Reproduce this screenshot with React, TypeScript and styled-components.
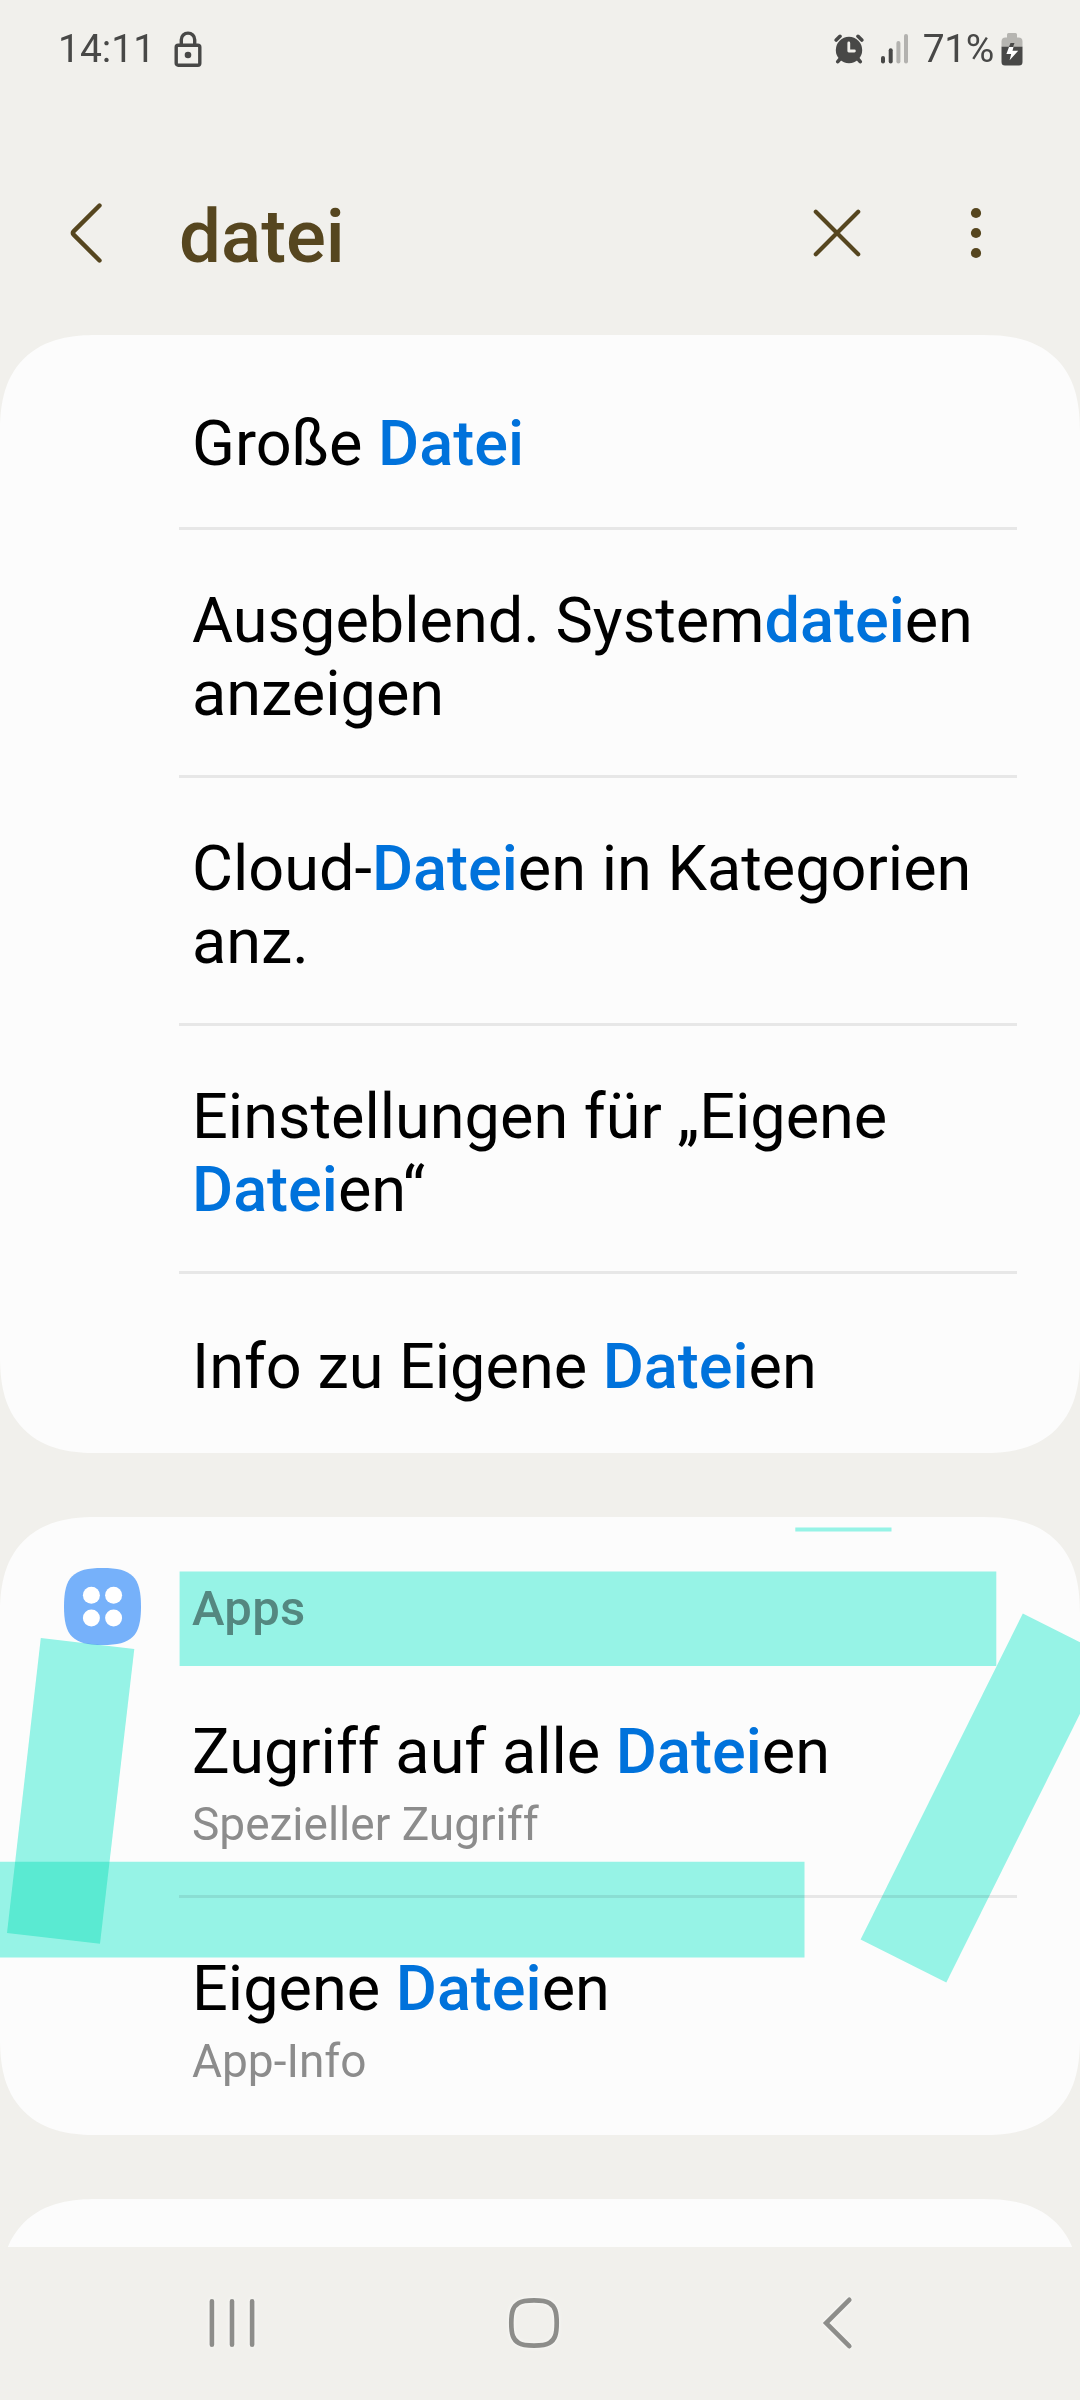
import React from 'react';
import styled, { createGlobalStyle } from 'styled-components';

const GlobalStyle = createGlobalStyle`
  html, body { margin: 0; padding: 0; background: #f1f0ec; }
  * { box-sizing: border-box; }
`;

const Screen = styled.div`
  position: relative;
  display: flex;
  flex-direction: column;
  width: 1080px;
  height: 2400px;
  overflow: hidden;
  background: #f1f0ec;
  font-family: Roboto, 'Noto Sans', sans-serif;
`;

const StatusBar = styled.header`
  display: flex;
  align-items: center;
  justify-content: space-between;
  height: 98px;
  padding: 0 57px 0 58px;
  color: #484847;
`;

const StatusGroup = styled.div<{ $gap: number }>`
  display: flex;
  align-items: center;
  gap: ${(p) => p.$gap}px;
`;

const StatusText = styled.span<{ $spacing?: number }>`
  font-size: 39px;
  line-height: 46px;
  letter-spacing: ${(p) => p.$spacing ?? 0}px;
`;

const Toolbar = styled.div`
  display: flex;
  align-items: center;
  height: 237px;
  padding: 33px 11px 0 61px;
  color: #56461f;
`;

const IconButton = styled.button<{ $w: number }>`
  display: flex;
  align-items: center;
  justify-content: center;
  width: ${(p) => p.$w}px;
  height: 90px;
  padding: 0;
  border: 0;
  background: none;
  color: inherit;
`;

const Query = styled.div`
  flex: 1;
  padding: 8px 0 0 72px;
  font-size: 74.5px;
  font-weight: 500;
  line-height: 86px;
`;

const Results = styled.main`
  display: flex;
  flex: 1;
  flex-direction: column;
  gap: 64px;
  min-height: 0;
  overflow: hidden;
`;

const Card = styled.section<{ $h: number; $top: number }>`
  display: flex;
  flex: none;
  flex-direction: column;
  height: ${(p) => p.$h}px;
  padding: ${(p) => p.$top}px 63px 0 179px;
  border-radius: 84px;
  background: #fcfcfc;

  @supports (corner-shape: squircle) {
    border-radius: 97px;
    corner-shape: superellipse(1.3);
  }
`;

const Row = styled.div<{ $h: number; $pad?: number }>`
  flex: none;
  height: ${(p) => p.$h}px;
  padding: ${(p) => p.$pad ?? 54}px 0 0 13px;

  & + & {
    border-top: 3px solid #e7e7e7;
  }
`;

const Title = styled.div`
  font-size: 63px;
  line-height: 73px;
  color: #000;
`;

const Match = styled.span`
  font-weight: 500;
  color: #0072db;
`;

const Subtitle = styled.div`
  font-size: 46px;
  line-height: 53px;
  padding-top: 10px;
  color: #8c8c8c;
`;

const GroupHeader = styled.div`
  display: flex;
  align-items: center;
  gap: 51px;
  height: 77px;
  margin: 0 0 16px -115px;
`;

const GroupName = styled.h2`
  margin: 4px 0 0;
  font-size: 49px;
  font-weight: 500;
  line-height: 56px;
  letter-spacing: 0.3px;
  color: #8c8c8c;
`;

const NavBar = styled.nav`
  display: grid;
  grid-template-columns: 302px 314px 40px;
  align-items: start;
  height: 153px;
  padding: 46px 222px 0 202px;
  color: #8d8d8a;

  svg {
    filter: drop-shadow(0 0 2px #fbfbf9);
  }
`;

const Marker = styled.svg`
  position: absolute;
  inset: 0;
  mix-blend-mode: multiply;
  pointer-events: none;

  polygon {
    fill: #98f6e9;
    mix-blend-mode: multiply;
  }
`;

const strips = [
  '795.3,1527.5 891.5,1527.5 891.5,1531.4 795.3,1531.4',
  '179.6,1571.6 996.3,1571.6 996.3,1666 179.6,1666',
  '40.8,1638 134.3,1649 100,1943.8 7,1933',
  '0,1861.7 804.5,1861.7 804.5,1957.6 0,1957.6',
  '1022.8,1613.5 1108.5,1656.5 946.3,1982.4 860.6,1939.6',
];

const LockIcon = () => (
  <svg width="28" height="36" viewBox="0 0 28 36" fill="none" stroke="currentColor" strokeWidth="3.4">
    <rect x="2.2" y="14.2" width="23.6" height="20" rx="2" />
    <path d="M7.3 14V8.8a6.7 6.7 0 0 1 13.4 0V14" />
    <circle cx="14" cy="24" r="3.3" fill="currentColor" stroke="none" />
  </svg>
);

const AlarmIcon = () => (
  <svg width="30" height="30" viewBox="0 0 30 30" fill="none" strokeLinecap="round">
    <circle cx="15" cy="16" r="13.2" fill="currentColor" />
    <g stroke="currentColor" strokeWidth="3.6">
      <path d="M2.2 6 6 2.3M27.8 6 24 2.3" />
      <path d="M6 25 3.8 27.6M24 25l2.2 2.6" />
    </g>
    <path d="M14.8 9v8h5.6" stroke="#f1f0ec" strokeWidth="2.8" strokeLinejoin="round" />
  </svg>
);

const SignalIcon = () => (
  <svg width="27" height="30" viewBox="0 0 27 30" fill="currentColor">
    <rect x="0" y="22" width="4" height="7.6" rx="2" />
    <rect x="7.7" y="14.3" width="4" height="15.3" rx="2" />
    <rect x="15.4" y="7" width="4" height="22.6" rx="2" fill="#b3b2af" />
    <rect x="23" y="0" width="4" height="29.6" rx="2" fill="#b3b2af" />
  </svg>
);

const BatteryIcon = () => (
  <svg width="22" height="33" viewBox="0 0 22 33">
    <path d="M7.5 0h7A1.5 1.5 0 0 1 16 1.5V4.4h1.5a4 4 0 0 1 4 4V14H.5V8.4a4 4 0 0 1 4-4H6V1.5A1.5 1.5 0 0 1 7.5 0z" fill="#b6b5b1" />
    <path d="M.5 13.7h21V29a3.500 3.500 0 0 1-3.500 3.500H4A3.500 3.500 0 0 1 .5 29z" fill="currentColor" />
    <path d="M9.500 10h4l-1.500 4H8z" fill="currentColor" />
    <path d="M8 14h4.500l-1 3.800h5.700L8.600 27.200l1.600-6.200H5.400z" fill="#fff" />
  </svg>
);

const BackIcon = () => (
  <svg width="40" height="64" viewBox="0 0 40 64" fill="none" stroke="currentColor" strokeWidth="4.4" strokeLinecap="round" strokeLinejoin="round">
    <path d="M35.500 4.500 9.600 30.400q-1.600 1.600 0 3.200L35.500 59.500" />
  </svg>
);

const ClearIcon = () => (
  <svg width="50" height="50" viewBox="0 0 50 50" stroke="currentColor" strokeWidth="4.200" strokeLinecap="round">
    <path d="M3.800 3.800 46.200 46.200M46.200 3.800 3.800 46.200" />
  </svg>
);

const MoreIcon = () => (
  <svg width="12" height="52" viewBox="0 0 12 52" fill="currentColor">
    <circle cx="6" cy="6" r="5.100" />
    <circle cx="6" cy="26" r="5.100" />
    <circle cx="6" cy="46" r="5.100" />
  </svg>
);

const AppsIcon = () => (
  <svg width="77" height="77" viewBox="0 0 77 77">
    <path d="M38.500 0C68 0 77 9 77 38.500S68 77 38.500 77 0 68 0 38.500 9 0 38.500 0z" fill="#76b1fa" />
    <g fill="#fff">
      <circle cx="27.400" cy="27.300" r="8.500" />
      <circle cx="49.600" cy="27.300" r="8.500" />
      <circle cx="27.400" cy="50" r="8.500" />
      <circle cx="49.600" cy="50" r="8.500" />
    </g>
  </svg>
);

const RecentsIcon = () => (
  <svg width="60" height="60" viewBox="0 0 60 60" stroke="currentColor" strokeWidth="4.600" strokeLinecap="round">
    <path d="M9.900 8.300V51.700M30 8.300V51.700M50.100 8.300V51.700" />
  </svg>
);

const HomeIcon = () => (
  <svg width="60" height="60" viewBox="0 0 60 60" fill="none" stroke="currentColor" strokeWidth="4.700">
    <path d="M30 7.300c6 0 11.500.2 15.300 2.600 5.800 3.500 7.400 9 7.400 20.100s-1.600 16.600-7.400 20.100C41.500 52.500 36 52.700 30 52.700s-11.500-.2-15.300-2.600C8.900 46.600 7.300 41.100 7.300 30s1.600-16.600 7.400-20.100C18.500 7.500 24 7.300 30 7.300z" />
  </svg>
);

const NavBackIcon = () => (
  <svg width="40" height="60" viewBox="0 0 40 60" fill="none" stroke="currentColor" strokeWidth="4.600" strokeLinecap="round">
    <path d="M31.300 6.800 8.100 30 31.300 53.200" />
  </svg>
);

const settings = [
  { h: 174, parts: ['Große ', 'Datei', ''] },
  { h: 248, parts: ['Ausgeblend. System', 'datei', 'en anzeigen'] },
  { h: 248, parts: ['Cloud-', 'Datei', 'en in Kategorien anz.'] },
  { h: 248, parts: ['Einstellungen für „Eigene ', 'Datei', 'en“'] },
  { h: 182, pad: 56, parts: ['Info zu Eigene ', 'Datei', 'en'] },
];

const apps = [
  { h: 234, parts: ['Zugriff auf alle ', 'Datei', 'en'], note: 'Spezieller Zugriff' },
  { h: 240, parts: ['Eigene ', 'Datei', 'en'], note: 'App-Info' },
];

const Highlighted = ({ parts }: { parts: string[] }) => (
  <Title>
    {parts[0]}
    <Match>{parts[1]}</Match>
    {parts[2]}
  </Title>
);

export default function App() {
  return (
    <>
      <GlobalStyle />
      <Screen>
        <StatusBar>
          <StatusGroup $gap={19}>
            <StatusText>14:11</StatusText>
            <LockIcon />
          </StatusGroup>
          <StatusGroup $gap={15}>
            <StatusGroup $gap={17}>
              <AlarmIcon />
              <SignalIcon />
            </StatusGroup>
            <StatusGroup $gap={7}>
              <StatusText $spacing={-0.4}>71%</StatusText>
              <BatteryIcon />
            </StatusGroup>
          </StatusGroup>
        </StatusBar>
        <Toolbar>
          <IconButton $w={46} aria-label="Zurück"><BackIcon /></IconButton>
          <Query>datei</Query>
          <IconButton $w={93} aria-label="Löschen"><ClearIcon /></IconButton>
          <IconButton $w={186} aria-label="Mehr"><MoreIcon /></IconButton>
        </Toolbar>
        <Results>
          <Card $h={1118} $top={18}>
            {settings.map((s) => (
              <Row key={s.parts[0]} $h={s.h} $pad={s.pad}>
                <Highlighted parts={s.parts} />
              </Row>
            ))}
          </Card>
          <Card $h={618} $top={51}>
            <GroupHeader>
              <AppsIcon />
              <GroupName>Apps</GroupName>
            </GroupHeader>
            {apps.map((a) => (
              <Row key={a.note} $h={a.h}>
                <Highlighted parts={a.parts} />
                <Subtitle>{a.note}</Subtitle>
              </Row>
            ))}
          </Card>
          <Card $h={300} $top={0} />
        </Results>
        <NavBar>
          <RecentsIcon />
          <HomeIcon />
          <NavBackIcon />
        </NavBar>
        <Marker width="1080" height="2400" viewBox="0 0 1080 2400">
          {strips.map((points) => (
            <polygon key={points} points={points} />
          ))}
        </Marker>
      </Screen>
    </>
  );
}
